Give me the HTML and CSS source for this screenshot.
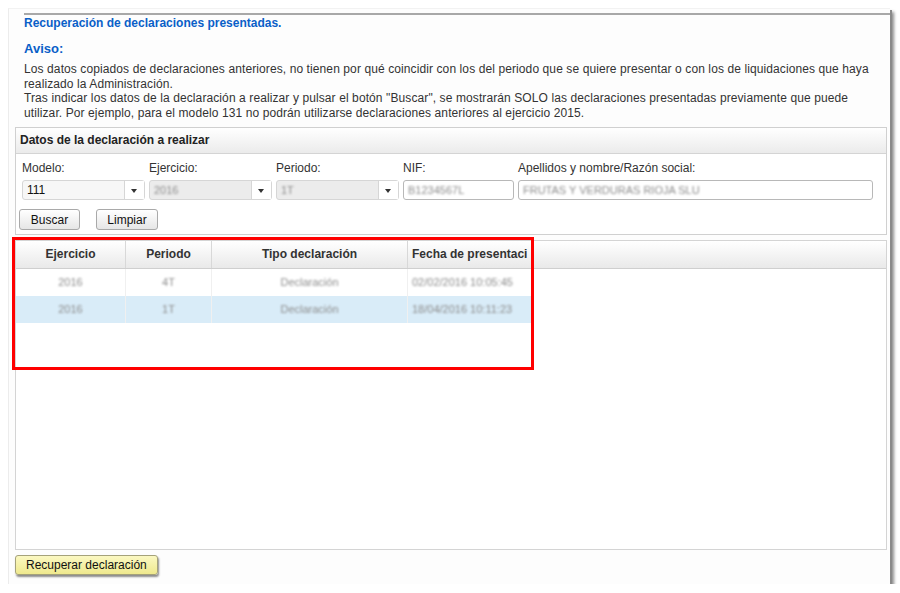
FILE: index.html
```html
<!DOCTYPE html>
<html lang="es">
<head>
    <meta charset="UTF-8">
    <title>Recuperación de declaraciones presentadas</title>
    <link rel="stylesheet" href="styles.css">
</head>
<body>
    <div class="window">
        <div class="content">
            <h1 class="title">Recuperación de declaraciones presentadas.</h1>
            <h2 class="aviso">Aviso:</h2>
            <p class="note">
                Los datos copiados de declaraciones anteriores, no tienen por qué coincidir con los del periodo que se quiere presentar o con los de liquidaciones que haya realizado la Administración.<br>
                Tras indicar los datos de la declaración a realizar y pulsar el botón "Buscar", se mostrarán SOLO las declaraciones presentadas previamente que puede utilizar. Por ejemplo, para el modelo 131 no podrán utilizarse declaraciones anteriores al ejercicio 2015.
            </p>
        </div>

        <div class="panel">
            <div class="panel-head">Datos de la declaración a realizar</div>
            <div class="panel-body">
                <div class="fields">
                    <div class="field f-modelo">
                        <label>Modelo:</label>
                        <div class="select">
                            <span class="value">111</span>
                            <span class="arrow"></span>
                        </div>
                    </div>
                    <div class="field f-ejercicio">
                        <label>Ejercicio:</label>
                        <div class="select disabled">
                            <span class="value"><span class="blur">2016</span></span>
                            <span class="arrow"></span>
                        </div>
                    </div>
                    <div class="field f-periodo">
                        <label>Periodo:</label>
                        <div class="select disabled">
                            <span class="value"><span class="blur">1T</span></span>
                            <span class="arrow"></span>
                        </div>
                    </div>
                    <div class="field f-nif">
                        <label>NIF:</label>
                        <div class="input"><span class="blur">B1234567L</span></div>
                    </div>
                    <div class="field f-nombre">
                        <label>Apellidos y nombre/Razón social:</label>
                        <div class="input"><span class="blur">FRUTAS Y VERDURAS RIOJA SLU</span></div>
                    </div>
                </div>
                <div class="actions">
                    <button class="btn">Buscar</button>
                    <button class="btn">Limpiar</button>
                </div>
            </div>
        </div>

        <div class="grid">
            <div class="grid-head">
                <div class="col c-ej">Ejercicio</div>
                <div class="col c-per">Periodo</div>
                <div class="col c-tipo">Tipo declaración</div>
                <div class="col c-fecha">Fecha de presentaci</div>
            </div>
            <div class="grid-row">
                <div class="col c-ej"><span class="blur">2016</span></div>
                <div class="col c-per"><span class="blur">4T</span></div>
                <div class="col c-tipo"><span class="blur">Declaración</span></div>
                <div class="col c-fecha"><span class="blur">02/02/2016 10:05:45</span></div>
            </div>
            <div class="grid-row selected">
                <div class="col c-ej"><span class="blur">2016</span></div>
                <div class="col c-per"><span class="blur">1T</span></div>
                <div class="col c-tipo"><span class="blur">Declaración</span></div>
                <div class="col c-fecha"><span class="blur">18/04/2016 10:11:23</span></div>
            </div>
        </div>

        <div class="footer">
            <button class="btn-recover">Recuperar declaración</button>
        </div>

        <div class="highlight"></div>
    </div>
</body>
</html>
```

FILE: styles.css
```css
body {
    margin: 0;
    background: #fff;
    font-family: "Liberation Sans", Arial, sans-serif;
    font-size: 12px;
    color: #222;
}
.window {
    position: relative;
    box-sizing: border-box;
    width: 882px;
    height: 576px;
    margin: 8px 0 0 8px;
    padding: 4px 3px 0 6px;
    background: #fdfdfd;
    border-left: 1px solid #ececec;
    border-top: 1px solid #f2f2f2;
    box-shadow: 2px 2px 0 #8a8a8a, 4px 4px 3px rgba(0,0,0,0.45);
}
.content {
    margin-left: 9px;
    margin-right: -3px;
    border-top: 2px solid #a8a8a8;
}
.title {
    margin: 0;
    padding-top: 1px;
    font-size: 12px;
    line-height: 14px;
    color: #0a5fc8;
    font-weight: bold;
}
.aviso {
    margin: 12px 0 0 0;
    font-size: 13px;
    line-height: 14px;
    color: #0a5fc8;
    font-weight: bold;
}
.note {
    margin: 6px 0 0 0;
    width: 855px;
    line-height: 14.5px;
    letter-spacing: 0.1px;
    color: #333;
}
.panel {
    margin-top: 7px;
    border: 1px solid #d0d0d0;
    background: #fff;
}
.panel-head {
    height: 25px;
    line-height: 25px;
    padding-left: 4px;
    font-weight: bold;
    color: #222;
    background: linear-gradient(#ffffff, #ebebeb);
    border-bottom: 1px solid #d4d4d4;
}
.panel-body {
    padding: 7px 3px 4px 3px;
}
.fields {
    display: flex;
    padding-left: 3px;
}
.field label {
    display: block;
    line-height: 14px;
    color: #333;
    margin-bottom: 5px;
}
.f-modelo, .f-ejercicio, .f-periodo { width: 123px; margin-right: 4px; }
.f-nif { width: 111px; margin-right: 4px; }
.f-nombre { width: 355px; }
.select {
    display: flex;
    height: 20px;
    box-sizing: border-box;
    border: 1px solid #d6d6d6;
    border-radius: 3px;
    background: #f7f7f7;
}
.select.disabled {
    background: #ececec;
}
.select .value {
    flex: 1;
    line-height: 18px;
    padding-left: 4px;
    color: #111;
}
.select .arrow {
    width: 19px;
    border-left: 1px solid #d6d6d6;
    background: #fff;
    position: relative;
}
.select .arrow::after {
    content: "";
    position: absolute;
    left: 6px;
    top: 8px;
    border-left: 3.5px solid transparent;
    border-right: 3.5px solid transparent;
    border-top: 4px solid #333;
}
.input {
    height: 20px;
    box-sizing: border-box;
    border: 1px solid #b8b8b8;
    border-radius: 3px;
    background: #fff;
    line-height: 18px;
    padding-left: 4px;
}
.blur {
    display: inline-block;
    color: #8c8c8c;
    filter: blur(1.3px);
    font-size: 11px;
    font-weight: normal;
}
.actions {
    display: flex;
    gap: 16px;
    margin-top: 9px;
}
.btn {
    height: 21px;
    padding: 0 8px;
    font-family: inherit;
    font-size: 12px;
    color: #111;
    background: linear-gradient(#ffffff, #e6e6e6);
    border: 1px solid #a9a9a9;
    border-radius: 3px;
}
.btn:first-child { width: 61px; }
.btn:last-child { width: 62px; }
.grid {
    margin-top: 5px;
    height: 310px;
    box-sizing: border-box;
    border: 1px solid #d4d4d4;
    background: #fff;
}
.grid-head {
    display: flex;
    height: 27px;
    background: linear-gradient(#ffffff, #e9e9e9);
    border-bottom: 1px solid #cfcfcf;
    font-weight: bold;
    color: #333;
}
.grid-row {
    display: flex;
    width: 516px;
    height: 27px;
}
.grid-row.selected {
    background: #d9ecf8;
}
.col {
    box-sizing: border-box;
    text-align: center;
    line-height: 27px;
    border-right: 1px solid #d8d8d8;
    white-space: nowrap;
    overflow: hidden;
}
.grid-row .col {
    border-right-color: #f0f0f0;
}
.c-ej { width: 110px; }
.c-per { width: 86px; }
.c-tipo { width: 196px; }
.c-fecha { width: 124px; text-align: left; padding-left: 4px; }
.footer {
    padding-top: 5px;
}
.btn-recover {
    height: 20px;
    padding: 0 10px;
    font-family: inherit;
    font-size: 12px;
    color: #111;
    background: linear-gradient(#fbf8c2, #efe98e);
    border: 1px solid #a5a27a;
    border-radius: 3px;
    box-shadow: 1px 2px 2px rgba(0,0,0,0.45);
}
.highlight {
    position: absolute;
    left: 3px;
    top: 228px;
    width: 516px;
    height: 127px;
    border: 3px solid #f00;
    pointer-events: none;
}
```
